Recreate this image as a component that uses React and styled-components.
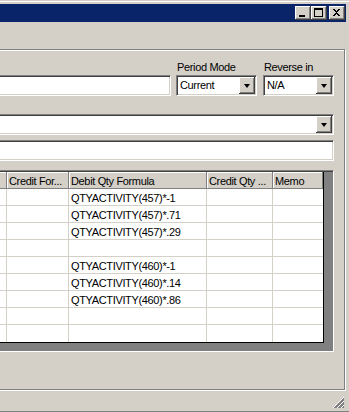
import React from 'react';
import styled, { createGlobalStyle } from 'styled-components';

const GlobalStyle = createGlobalStyle`
  html, body {
    margin: 0;
    padding: 0;
    overflow: hidden;
    background: #d4d0c8;
  }
  body {
    font-family: "Liberation Sans", Arial, sans-serif;
    font-size: 11px;
    letter-spacing: -0.35px;
    color: #000;
  }
`;

// the window runs on past the left edge of the shot
const Window = styled.div`
  margin-left: -60px;
  width: 409px;
  height: 412px;
  box-sizing: border-box;
  padding: 4px 3px 2px 0;
  background: #d4d0c8;
  display: flex;
  flex-direction: column;
  box-shadow: inset 0 1px 0 #d4d0c8, inset 0 2px 0 #fff,
    inset 0 -1px 0 #808080;
`;

const TitleBar = styled.div`
  height: 18px;
  flex: none;
  background: #0a246a;
  display: flex;
  justify-content: flex-end;
  align-items: center;
  padding-right: 1px;
`;

const TitleButton = styled.div`
  width: 16px;
  height: 14px;
  margin-left: ${p => (p.$gap ? '2px' : '0')};
  background: #d4d0c8;
  box-shadow: inset -1px -1px 0 #404040, inset 1px 1px 0 #fff,
    inset -2px -2px 0 #808080;
  display: flex;
  align-items: center;
  justify-content: center;
  svg { display: block; }
`;

const Client = styled.div`
  flex: 1;
  display: flex;
  flex-direction: column;
  padding-top: 27px;
`;

const GroupBox = styled.div`
  height: 341px;
  box-sizing: border-box;
  margin: 0 1px 0 8px;
  border: 1px solid #808080;
  box-shadow: inset 1px 1px 0 #fff, 1px 1px 0 #fff;
  padding: 10px 10px 0 10px;
  display: flex;
  flex-direction: column;
`;

const FieldRow = styled.div`
  display: flex;
  align-items: flex-end;
`;

const Field = styled.div`
  display: flex;
  flex-direction: column;
  width: ${p => (p.$width ? `${p.$width}px` : 'auto')};
  flex: ${p => (p.$width ? 'none' : '1')};
  margin-left: ${p => p.$gap || 0}px;
`;

const Label = styled.div`
  height: 13px;
  line-height: 14px;
  padding-left: 1px;
  margin-bottom: 2px;
  white-space: nowrap;
`;

const Sunken = styled.div`
  height: 21px;
  box-sizing: border-box;
  background: #fff;
  border: 1px solid;
  border-color: #808080 #fff #fff #808080;
  box-shadow: inset 1px 1px 0 #404040, inset -1px -1px 0 #d4d0c8;
  padding: 1px;
  display: flex;
  margin-top: ${p => p.$top || 0}px;
`;

const ComboText = styled.div`
  flex: 1;
  line-height: 17px;
  padding-left: 2px;
  white-space: nowrap;
  overflow: hidden;
`;

const DropButton = styled.div`
  width: 16px;
  height: 17px;
  flex: none;
  background: #d4d0c8;
  box-shadow: inset -1px -1px 0 #404040, inset 1px 1px 0 #fff,
    inset -2px -2px 0 #808080;
  display: flex;
  align-items: center;
  justify-content: center;
  &::after {
    content: '';
    border-left: 3.5px solid transparent;
    border-right: 3.5px solid transparent;
    border-top: 4px solid #000;
    margin-top: 1px;
  }
`;

const GridFrame = styled.div`
  margin-top: 9px;
  height: 182px;
  box-sizing: border-box;
  background: #808080;
  border-top: 1px solid #808080;
  border-left: 2px solid #404040;
  border-right: 1px solid #fff;
  border-bottom: 1px solid #fff;
  box-shadow: inset 0 1px 0 #404040;
  padding-top: 1px;
  display: flex;
  align-items: flex-start;
`;

const Table = styled.div`
  display: grid;
  grid-template-columns: 46px 62px 138px 66px 50px;
  grid-auto-rows: 17px;
  border-right: 1px solid #000;
  border-bottom: 1px solid #000;
  background: #fff;
`;

const HeadCell = styled.div`
  background: #d4d0c8;
  box-shadow: inset -1px -1px 0 #808080, inset 1px 1px 0 #fff;
  padding: 3px 0 0 2px;
  line-height: 13px;
  white-space: nowrap;
  overflow: hidden;
`;

const Cell = styled.div`
  box-sizing: border-box;
  border-right: ${p => (p.$last ? 'none' : '1px solid #d4d0c8')};
  border-bottom: ${p => (p.$bottom ? 'none' : '1px solid #d4d0c8')};
  padding: 3px 0 0 2px;
  line-height: 13px;
  white-space: nowrap;
  overflow: hidden;
`;

const StatusArea = styled.div`
  flex: 1;
  display: flex;
  justify-content: flex-end;
  align-items: flex-end;
  padding: 0 1px 1px 0;
`;

const columns = ['', 'Credit For...', 'Debit Qty Formula', 'Credit Qty ...', 'Memo'];

const formulas = [
  'QTYACTIVITY(457)*-1',
  'QTYACTIVITY(457)*.71',
  'QTYACTIVITY(457)*.29',
  '',
  'QTYACTIVITY(460)*-1',
  'QTYACTIVITY(460)*.14',
  'QTYACTIVITY(460)*.86',
  '',
  '',
];

const MinIcon = () => (
  <svg width="16" height="14" shapeRendering="crispEdges">
    <rect x="4" y="9" width="6" height="2" fill="#000" />
  </svg>
);

const MaxIcon = () => (
  <svg width="16" height="14" shapeRendering="crispEdges">
    <rect x="3.5" y="2.5" width="8" height="8" fill="none" stroke="#000" />
    <rect x="3" y="3" width="9" height="1" fill="#000" />
  </svg>
);

const CloseIcon = () => (
  <svg width="16" height="14" shapeRendering="crispEdges">
    <path d="M4 3h2v1h1v1h1v-1h1v-1h2v1h-1v1h-1v1h-1v1h1v1h1v1h1v1h-2v-1h-1v-1h-1v1h-1v1h-2v-1h1v-1h1v-1h1v-1h-1v-1h-1v-1h-1z" fill="#000" />
  </svg>
);

const Grip = () => (
  <svg width="12" height="12" shapeRendering="crispEdges">
    {[0, 4, 8].map(o => (
      <g key={o}>
        <line x1={11} y1={o + 0.5} x2={o + 0.5} y2={11} stroke="#fff" />
        <line x1={11} y1={o + 1.5} x2={o + 1.5} y2={11} stroke="#808080" />
        <line x1={11} y1={o + 2.5} x2={o + 2.5} y2={11} stroke="#808080" />
      </g>
    ))}
  </svg>
);

export default function App() {
  return (
    <>
      <GlobalStyle />
      <Window>
        <TitleBar>
          <TitleButton><MinIcon /></TitleButton>
          <TitleButton><MaxIcon /></TitleButton>
          <TitleButton $gap><CloseIcon /></TitleButton>
        </TitleBar>
        <Client>
          <GroupBox>
            <FieldRow>
              <Field>
                <Label />
                <Sunken />
              </Field>
              <Field $width={81} $gap={5}>
                <Label>Period Mode</Label>
                <Sunken>
                  <ComboText>Current</ComboText>
                  <DropButton />
                </Sunken>
              </Field>
              <Field $width={71} $gap={6}>
                <Label>Reverse in</Label>
                <Sunken>
                  <ComboText>N/A</ComboText>
                  <DropButton />
                </Sunken>
              </Field>
            </FieldRow>
            <Sunken $top={18}>
              <ComboText />
              <DropButton />
            </Sunken>
            <Sunken $top={5} />
            <GridFrame>
              <Table>
                {columns.map((c, i) => (
                  <HeadCell key={i}>{c}</HeadCell>
                ))}
                {formulas.map((f, r) =>
                  columns.map((_, c) => (
                    <Cell key={`${r}-${c}`} $last={c === 4} $bottom={r === formulas.length - 1}>
                      {c === 2 ? f : ''}
                    </Cell>
                  ))
                )}
              </Table>
            </GridFrame>
          </GroupBox>
          <StatusArea>
            <Grip />
          </StatusArea>
        </Client>
      </Window>
    </>
  );
}
